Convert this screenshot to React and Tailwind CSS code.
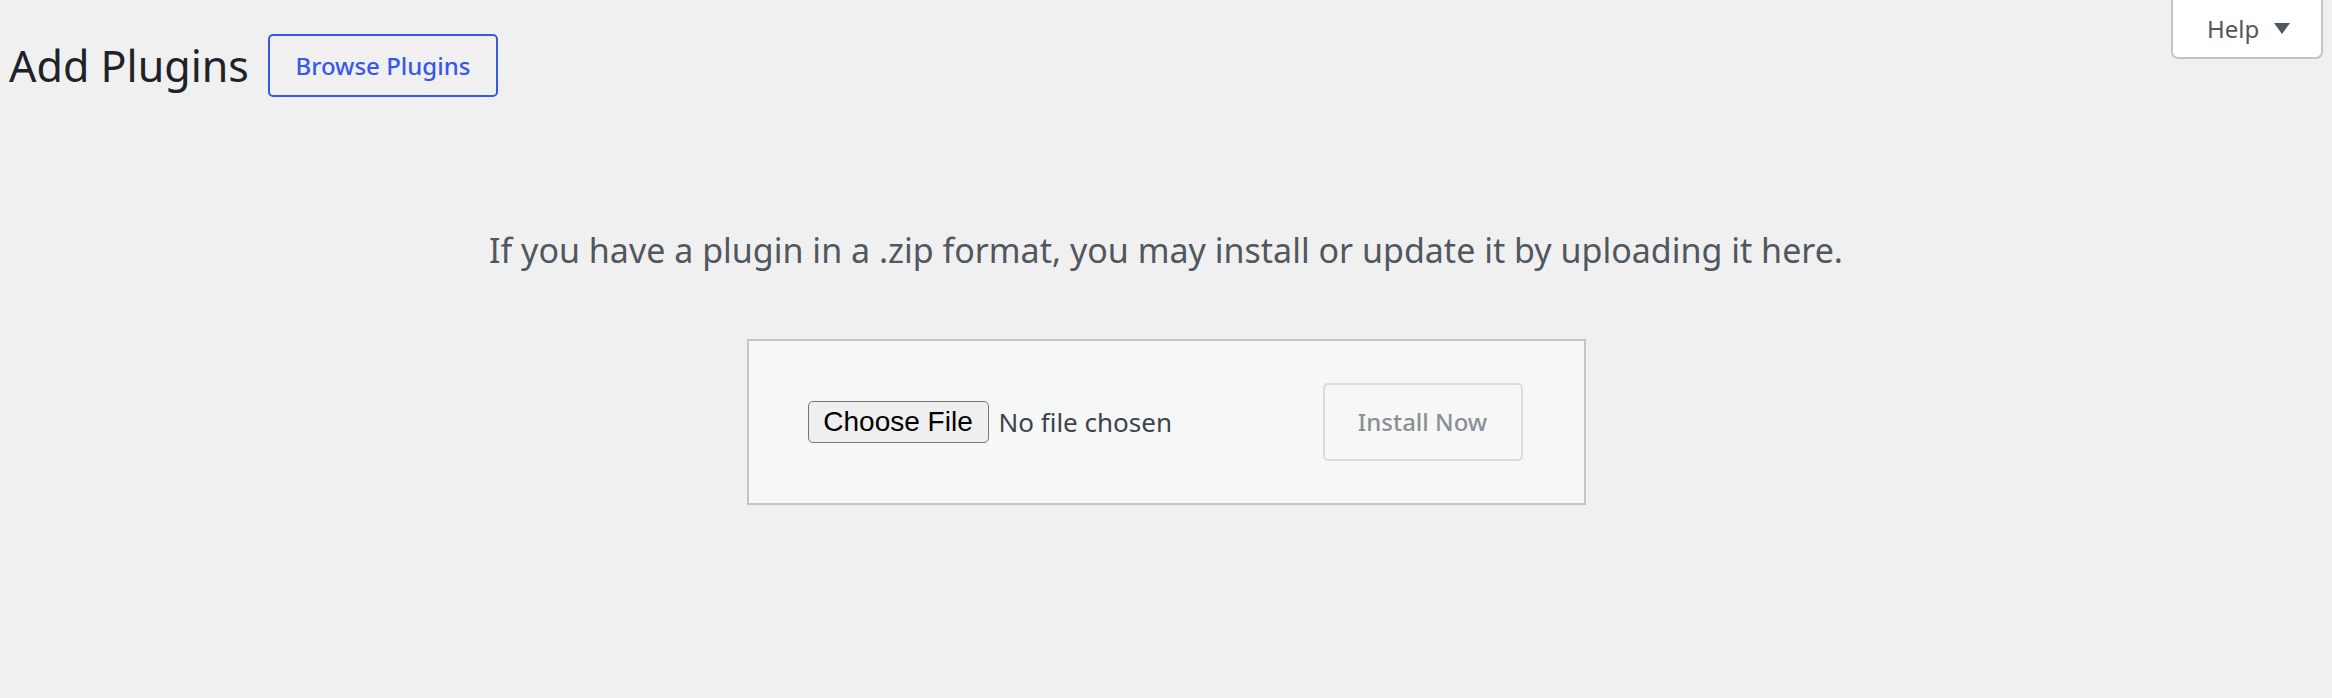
import React from 'react';

const sans = "font-['Noto_Sans',sans-serif]";

const HelpTab = () => (
    <button
        type="button"
        className={`absolute right-[9px] top-0 flex h-[59px] w-[152px] items-center rounded-b-[7px] border-2 border-t-0 border-[#c3c4c7] bg-white pl-[34px] text-[24px] text-[#50575e] ${sans}`}
    >
        <span>Help</span>
        <svg width="16" height="11" viewBox="0 0 16 11" className="ml-[15px]">
            <polygon points="0,0 16,0 8,11" fill="#50575e" />
        </svg>
    </button>
);

const UploadForm = () => (
    <div className="flex h-[166px] w-[839px] items-center justify-between border-2 border-[#c3c4c7] bg-[#f6f7f7] pl-[59px] pr-[61px]">
        <div className="flex items-center">
            {/* native file input look */}
            <span className="flex h-[42px] w-[181px] items-center justify-center rounded-[5px] border-[1.5px] border-[#767676] bg-[#efefef] text-[28px] text-black font-['Liberation_Sans',Arial,sans-serif]">
                Choose File
            </span>
            <span className={`ml-[10px] text-[26px] text-[#3c434a] ${sans}`}>No file chosen</span>
        </div>
        <button
            type="button"
            disabled
            className={`flex h-[78px] w-[200px] items-center justify-center rounded-[5px] border-2 border-[#dcdcde] bg-[#f6f7f7] text-[24px] font-medium text-[#8c8f94] ${sans}`}
        >
            Install Now
        </button>
    </div>
);

const App = () => {
    return (
        <div className="relative min-h-screen w-full bg-[#f0f0f1]">
            <HelpTab />

            {/* Title row */}
            <div className="flex items-center pl-[9px] pt-[34px]">
                <h1 className={`text-[43px] font-normal leading-[57px] text-[#1d2327] ${sans}`}>Add Plugins</h1>
                <a
                    href="#"
                    className={`ml-[19px] flex h-[63px] w-[230px] items-center justify-center rounded-[5px] border-2 border-[#3858e9] text-[24px] font-medium text-[#3858e9] ${sans}`}
                >
                    Browse Plugins
                </a>
            </div>

            {/* Upload section */}
            <div className="flex flex-col items-center">
                <p className={`mt-[129px] text-center text-[34px] leading-[48px] text-[#50575e] ${sans}`}>
                    If you have a plugin in a .zip format, you may install or update it by uploading it here.
                </p>
                <div className="mt-[65px]">
                    <UploadForm />
                </div>
            </div>
        </div>
    );
};

export default App;
